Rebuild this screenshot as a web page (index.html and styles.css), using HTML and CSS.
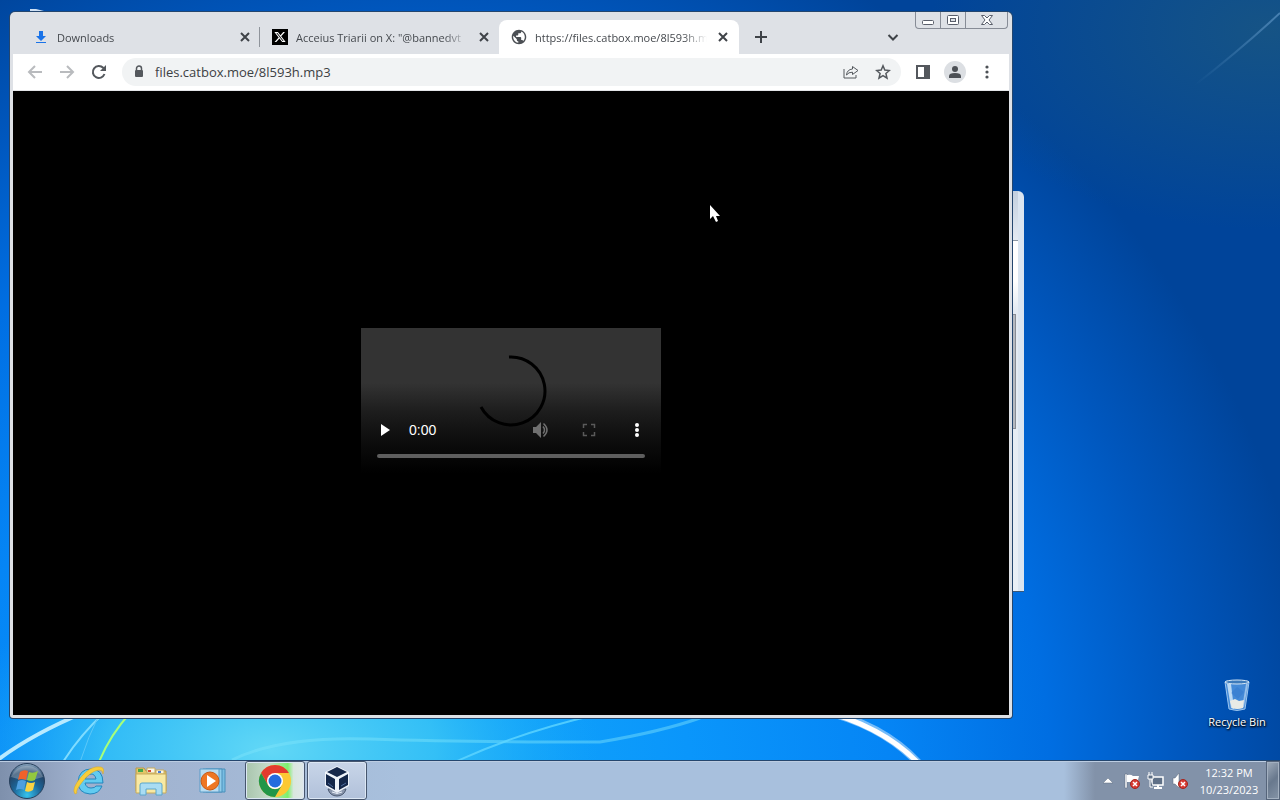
FILE: index.html
```
<!DOCTYPE html>
<html lang="en">
<head>
  <meta charset="UTF-8" />
  <meta name="viewport" content="width=device-width, initial-scale=1.0"/>
  <title>Desktop</title>
  <link rel="stylesheet" href="styles.css">
</head>
<body>

  <main class="desktop">
    <svg class="wallpaper" viewBox="0 0 1280 760" preserveAspectRatio="xMidYMax slice" aria-hidden="true">
      <defs>
        <radialGradient id="sky" gradientUnits="userSpaceOnUse" cx="420" cy="780" r="900">
          <stop offset="0" stop-color="#14a8fa"/>
          <stop offset=".3" stop-color="#0a96fb"/>
          <stop offset=".52" stop-color="#0585f5"/>
          <stop offset=".7" stop-color="#006ee2"/>
          <stop offset=".85" stop-color="#0057be"/>
          <stop offset="1" stop-color="#00449a"/>
        </radialGradient>
        <radialGradient id="glow">
          <stop offset="0" stop-color="#62d8f6"/>
          <stop offset=".5" stop-color="#3cc6f5" stop-opacity=".8"/>
          <stop offset="1" stop-color="#14a8fa" stop-opacity="0"/>
        </radialGradient>
        <radialGradient id="haze">
          <stop offset="0" stop-color="#1f5a7c" stop-opacity=".7"/>
          <stop offset="1" stop-color="#1f5a7c" stop-opacity="0"/>
        </radialGradient>
        <linearGradient id="ray" x1="0" y1="1" x2="1" y2="0">
          <stop offset="0" stop-color="#6aa0d0" stop-opacity="0"/>
          <stop offset="1" stop-color="#6aa0d0" stop-opacity=".6"/>
        </linearGradient>
      </defs>
      <rect width="1280" height="760" fill="url(#sky)"/>
      <ellipse cx="270" cy="750" rx="330" ry="180" fill="url(#glow)"/>
      <ellipse cx="1270" cy="30" rx="340" ry="200" fill="url(#haze)"/>
      <path d="M1195 85Q1240 50 1280 13" fill="none" stroke="url(#ray)" stroke-width="2"/>
      <g fill="none" stroke="#fff">
        <path d="M-5 762Q30 735 85 712" stroke="#b8eaff" stroke-width="4"/>
        <path d="M63 762Q80 735 105 712" stroke="#7fdcff" stroke-width="2"/>
        <path d="M80 762Q88 737 99 715" stroke="#5cc8f8"/>
        <path d="M99 762Q110 735 131 712" stroke="#a6ff7a" stroke-width="2"/>
        <path d="M232 760Q280 736 370 739T600 742Q660 732 700 718" stroke="#7fe4fb" stroke-width="3" opacity=".45"/>
        <path d="M455 762Q520 732 595 715" stroke="#5fd6ff" stroke-width="2" opacity=".8"/>
        <path d="M820 710Q885 725 921 766" stroke-width="8" opacity=".45"/>
        <path d="M820 710Q885 727 921 766" stroke-width="5"/>
      </g>
      <path d="M30 9h6l8 2v2H30z" fill="#cfe0f4"/>
    </svg>

    <a class="desktop-icon" href="#recycle-bin">
      <svg width="32" height="36" viewBox="0 0 32 36" aria-hidden="true">
        <path d="M4 4l4 27q8 3 16 0l4-27z" fill="#5b9ee4" fill-opacity=".75" stroke="#9cc6ef"/>
        <path d="M6 6l4 24 3 1-3-25z" fill="#d8ecfb" opacity=".8"/>
        <path d="M25 6l-4 24 2-1 4-23z" fill="#cbe2f8" opacity=".6"/>
        <path d="M9 23l5-2 4 2 5-1-1 8q-6 2-11 0z" fill="#e9ebe6"/>
        <path d="M10 15l6-6 7 5-6 7z" fill="#2b6fc8" opacity=".35"/>
        <ellipse cx="16" cy="4" rx="12" ry="2" fill="#3d7bbb" stroke="#d5e6f5"/>
      </svg>
      <span>Recycle Bin</span>
    </a>

    <div class="window-behind" aria-hidden="true">
      <div class="behind-caption"></div>
      <div class="behind-body"><div class="behind-thumb"></div></div>
    </div>

    <section class="browser" aria-label="Browser window">
      <div class="window-controls">
        <button class="win-min" aria-label="Minimize">
          <svg width="14" height="12" viewBox="0 0 14 12"><rect x="1.500" y="6.500" width="11" height="4" rx="1" fill="#fff" stroke="#5a5f6b"/></svg>
        </button>
        <button class="win-max" aria-label="Maximize">
          <svg width="14" height="12" viewBox="0 0 14 12"><rect x="1.500" y="1.500" width="11" height="9" rx="1" fill="#fff" stroke="#5a5f6b"/><rect x="4.500" y="4.500" width="5" height="3" fill="#dee1e6" stroke="#5a5f6b"/></svg>
        </button>
        <button class="win-close" aria-label="Close">
          <svg width="14" height="12" viewBox="0 0 14 12"><path d="M1.500 1.500h3L7 4l2.500-2.500h3L9 6l3.500 4.500h-3L7 8l-2.500 2.500h-3L5 6z" fill="#fff" stroke="#5a5f6b"/></svg>
        </button>
      </div>

      <div class="tab-strip" role="tablist">
        <div class="tab" role="tab">
          <svg width="16" height="16" viewBox="0 0 16 16"><path d="M6 2h4v5h3l-5 5-5-5h3zM3 13h10v1H3z" fill="#1a73e8"/></svg>
          <span class="tab-title">Downloads</span>
          <button class="tab-close" aria-label="Close tab"><svg width="10" height="10" viewBox="0 0 10 10"><path d="M1 1l8 8M9 1L1 9"/></svg></button>
        </div>
        <div class="tab" role="tab">
          <svg width="16" height="16" viewBox="-5 -5 34 34"><path d="M-5-5h34v34H-5z"/><path fill="#fff" d="M18.900 1.150h3.680l-8.040 9.190L24 22.850h-7.400l-5.800-7.590-6.640 7.590H.47l8.600-9.830L0 1.150h7.600l5.240 6.940zM17.600 20.640h2.040L6.490 3.240H4.300z"/></svg>
          <span class="tab-title">Acceius Triarii on X: "@bannedvt</span>
          <button class="tab-close" aria-label="Close tab"><svg width="10" height="10" viewBox="0 0 10 10"><path d="M1 1l8 8M9 1L1 9"/></svg></button>
        </div>
        <div class="tab active" role="tab" aria-selected="true">
          <svg width="16" height="16" viewBox="1 1 22 22"><path fill="#4b4f54" d="M12 2C6.480 2 2 6.480 2 12s4.480 10 10 10 10-4.480 10-10S17.520 2 12 2zm-1 17.930c-3.950-.49-7-3.850-7-7.930 0-.62.08-1.210.21-1.790L9 15v1c0 1.100.9 2 2 2v1.930zm6.900-2.540c-.26-.81-1-1.390-1.900-1.390h-1v-3c0-.55-.45-1-1-1H8v-2h2c.55 0 1-.45 1-1V7h2c1.100 0 2-.9 2-2v-.41c2.930 1.190 5 4.060 5 7.410 0 2.080-.8 3.970-2.100 5.390z"/></svg>
          <span class="tab-title">https://files.catbox.moe/8l593h.m</span>
          <button class="tab-close" aria-label="Close tab"><svg width="10" height="10" viewBox="0 0 10 10"><path d="M1 1l8 8M9 1L1 9"/></svg></button>
        </div>
        <button class="new-tab" aria-label="New tab"><svg width="14" height="14" viewBox="0 0 14 14"><path d="M7 1v12M1 7h12"/></svg></button>
        <button class="tab-search" aria-label="Search tabs"><svg width="12" height="12" viewBox="0 0 12 12"><path d="M1.500 4L6 8.500 10.500 4"/></svg></button>
      </div>

      <div class="toolbar">
        <button class="tool" aria-label="Back"><svg class="dim" width="16" height="16" viewBox="0 0 16 16"><path d="M15 8H2M8 2L2 8l6 6"/></svg></button>
        <button class="tool" aria-label="Forward"><svg class="dim" width="16" height="16" viewBox="0 0 16 16"><path d="M1 8h13M8 2l6 6-6 6"/></svg></button>
        <button class="tool" aria-label="Reload"><svg width="16" height="16" viewBox="0 0 16 16"><path d="M13.500 10A6 6 0 1 1 12.200 3.800L14 5.500" stroke-width="2"/><path d="M15 1v6H9z" fill="#54585d" stroke="none"/></svg></button>

        <div class="omnibox">
          <svg width="12" height="14" viewBox="0 0 12 14" aria-hidden="true"><rect x="2" y="5" width="8" height="7" rx="1" fill="#54585d"/><path d="M3.500 5V3.500a2.500 2.500 0 0 1 5 0V5" fill="none" stroke="#54585d" stroke-width="1.500"/></svg>
          <input class="address" type="text" aria-label="Address" value="files.catbox.moe/8l593h.mp3">
          <button class="tool" aria-label="Share"><svg width="16" height="16" viewBox="0 0 16 16"><path d="M1 5v9h12v-3" stroke-width="1"/><path d="M9.500 2.500l5.500 4-5.500 4V8.200Q5.500 8 3.500 11 4 5.500 9.500 5z" stroke-width="1"/></svg></button>
          <button class="tool" aria-label="Bookmark"><svg width="16" height="16" viewBox="0 0 16 16"><path d="M8 1.800l1.800 4.300 4.600.4-3.500 3 1.100 4.600L8 11.600l-4 2.500 1.100-4.600-3.500-3 4.600-.4z" stroke-width="1.500"/></svg></button>
        </div>

        <button class="tool" aria-label="Side panel"><svg width="14" height="14" viewBox="0 0 14 14"><path d="M1 1h12v12H1z" fill="#fff"/><path d="M9 1h4v12H9z" fill="#54585d"/></svg></button>
        <button class="tool" aria-label="Profile"><span class="avatar"><svg width="14" height="14" viewBox="0 0 14 14"><g fill="#4d5156" stroke="none"><circle cx="7" cy="4" r="3"/><path d="M1 13v-2q0-3 6-3t6 3v2z"/></g></svg></span></button>
        <button class="tool" aria-label="Menu"><svg width="4" height="14" viewBox="0 0 4 14"><g fill="#4d5156" stroke="none"><circle cx="2" cy="2" r="1.600"/><circle cx="2" cy="7" r="1.600"/><circle cx="2" cy="12" r="1.600"/></g></svg></button>
      </div>

      <div class="page">
        <div class="player">
          <svg class="spinner" width="74" height="74" viewBox="0 0 74 74" aria-hidden="true"><path d="M35 3A34 34 0 1 1 7 53" fill="none" stroke="#000" stroke-width="3"/></svg>
          <div class="controls">
            <button aria-label="Play"><svg width="10" height="12" viewBox="0 0 10 12"><path d="M1 0l9 6-9 6z" fill="#fff"/></svg></button>
            <span class="time">0:00</span>
            <button aria-label="Mute"><svg width="18" height="16" viewBox="0 0 18 16"><path d="M1 5h3l5-5v16l-5-5H1z" fill="#707070"/><path d="M11 4.500q3 3.500 0 7M11.500 1.500q7 6.500 0 13" fill="none" stroke="#707070" stroke-width="1.500"/></svg></button>
            <button aria-label="Full screen"><svg width="14" height="14" viewBox="0 0 14 14"><path d="M1.500 5V1.500H5M9 1.500h3.500V5M12.500 9v3.500H9M5 12.500H1.500V9" fill="none" stroke="#5a5a5a" stroke-width="1.500"/></svg></button>
            <button aria-label="More options"><svg width="4" height="14" viewBox="0 0 4 14"><g fill="#fff"><circle cx="2" cy="2" r="2"/><circle cx="2" cy="7" r="2"/><circle cx="2" cy="12" r="2"/></g></svg></button>
          </div>
          <input class="timeline" type="range" min="0" max="100" value="0" aria-label="Seek">
        </div>
      </div>
    </section>

    <svg class="pointer" width="12" height="18" viewBox="0 0 12 18" aria-hidden="true"><path d="M1 0v14l3-3 3 6 2-1-2-5h4z" fill="#fff"/></svg>
  </main>

  <footer class="taskbar">
    <button class="start" aria-label="Start">
      <svg width="38" height="38" viewBox="0 0 38 38">
        <defs>
          <radialGradient id="orb" cx=".5" cy=".9" r=".9">
            <stop offset="0" stop-color="#35c3ee"/>
            <stop offset=".45" stop-color="#1c6497"/>
            <stop offset=".75" stop-color="#234568"/>
            <stop offset="1" stop-color="#8fabc4"/>
          </radialGradient>
        </defs>
        <circle cx="19" cy="19" r="17.500" fill="url(#orb)" stroke="#27405c"/>
        <path d="M3 15A17 17 0 0 1 35 15Q19 21 3 15z" fill="#fff" opacity=".25"/>
        <path d="M12 10q4-3 8-1l-2 9q-4-2-8 0z" fill="#f0622a"/>
        <path d="M21 10q4 2 9-1l-3 9q-4 2-8 0z" fill="#93c83e"/>
        <path d="M10 19q4-2 8 0l-2 9q-4-2-8 0z" fill="#4f9fe0"/>
        <path d="M19 20q4 2 8 0l-2 8q-4 3-8 1z" fill="#fbd243"/>
      </svg>
    </button>
    <nav class="apps">
      <button class="app" aria-label="Internet Explorer">
        <svg width="34" height="34" viewBox="0 0 34 34">
          <path d="M31 19H13q1 5 6 5 4 0 5-2h6q-3 8-12 8Q6 29 6 18 7 5 19 5q12 0 12 14zm-18-4h11q-1-5-5-5t-6 5z" fill="#62cbf0" stroke="#2386bd"/>
          <path d="M3 30Q-1 25 9 13T29 3q4 1 2 7 0-4-4-4-8 1-16 11T5 29z" fill="#f7cd3b" stroke="#d9a521" stroke-width=".5"/>
        </svg>
      </button>
      <button class="app" aria-label="Windows Explorer">
        <svg width="34" height="32" viewBox="0 0 34 32">
          <path d="M2 3h8l2 3h20v20H2z" fill="#e4c768" stroke="#b9994a"/>
          <path d="M4 4h5v3H4z" fill="#45a849"/>
          <path d="M13 3h8v5h-8zM22 5h8v4h-8z" fill="#fbf7e8" stroke="#c7ab5c"/>
          <path d="M14 5h3v2h-3z" fill="#d94a2e"/><path d="M24 6h3v2h-3z" fill="#4b7dd1"/>
          <path d="M2 9h30v19H2z" fill="#f8e9a3" stroke="#c7ab5c"/>
          <path d="M6 30V20q0-2 2-2h18q2 0 2 2v10h-6v-6H12v6z" fill="#a9dcf3" stroke="#5aa6cc"/>
        </svg>
      </button>
      <button class="app" aria-label="Windows Media Player">
        <svg width="30" height="28" viewBox="0 0 30 28">
          <path d="M8 2h19v23H8z" fill="#79bde2" stroke="#4a90bb"/>
          <path d="M5 2h19v23H5z" fill="#91cdeb" stroke="#4a90bb"/>
          <path d="M2 2h19v23H2z" fill="#b8dcf1" stroke="#5a9dc8"/>
          <circle cx="12" cy="14" r="9" fill="#ee7623" stroke="#c85a15"/>
          <path d="M9 8l9 6-9 6z" fill="#fff"/>
        </svg>
      </button>
      <button class="app running chrome" aria-label="Google Chrome">
        <svg width="34" height="34" viewBox="0 0 34 34">
          <circle cx="17" cy="17" r="16" fill="#fcc934"/>
          <path d="M3.100 9A16 16 0 0 1 30.900 9H17z" fill="#e33b2e"/>
          <path d="M3.100 9L10 21 17 9z" fill="#e33b2e"/>
          <path d="M3.100 9L10 21a8 8 0 0 0 14 0l-7 12A16 16 0 0 1 3.100 9z" fill="#229648"/>
          <circle cx="17" cy="17" r="8" fill="#fff"/>
          <circle cx="17" cy="17" r="6.500" fill="#256bdd"/>
        </svg>
      </button>
      <button class="app running" aria-label="VirtualBox">
        <svg width="28" height="32" viewBox="0 0 28 32">
          <path d="M5 24q2 7 9 7t9-7z" fill="#8a97ad" stroke="#4a5870"/>
          <path d="M9 27q5 3 10 0" fill="none" stroke="#e8eef8"/>
          <path d="M14 1l12 6v14l-12 7-12-7V7z" fill="#eef3fa"/>
          <path d="M14 2l10 5-10 5L4 7z" fill="#14274a"/>
          <path d="M3 9l9 5v11l-9-5zM25 9l-9 5v11l9-5z" fill="#14274a"/>
          <path d="M5 18l5 4M18 21l5-3" stroke="#4c6b9c"/>
        </svg>
      </button>
    </nav>
    <div class="tray">
      <button aria-label="Show hidden icons"><svg width="10" height="6" viewBox="0 0 10 6"><path d="M5 0l5 5H0z" fill="#fff" stroke="#5c6c82" stroke-width=".5"/></svg></button>
      <button aria-label="Action Center"><svg width="18" height="18" viewBox="0 0 18 18"><path d="M2 2h2v14H2z" fill="#fff" stroke="#59677a" stroke-width=".5"/><path d="M4 3q4-1 6 1h6l-1 4 1 3q-4 1-6-1H4z" fill="#fff"/><circle cx="12" cy="12" r="4.500" fill="#d83b32" stroke="#a32620"/><path d="M10 10l4 4M14 10l-4 4" stroke="#fff" stroke-width="1.500"/></svg></button>
      <button aria-label="Network"><svg width="18" height="18" viewBox="0 0 18 18"><path d="M5 5h11v8H5z" fill="#5f7087" stroke="#fff" stroke-width="1.500"/><path d="M7 16h8M11 13v3" stroke="#fff" stroke-width="2"/><path d="M1 3h5v4H1zM2 0v3M5 0v3M3 7v8h3" fill="#5f7087" stroke="#fff"/></svg></button>
      <button aria-label="Volume"><svg width="18" height="18" viewBox="0 0 18 18"><path d="M2 6h2l4-5v15l-4-4H2z" fill="#fff" stroke="#59677a" stroke-width=".5"/><circle cx="12" cy="12" r="4.500" fill="#d83b32" stroke="#a32620"/><path d="M10 10l4 4M14 10l-4 4" stroke="#fff" stroke-width="1.500"/></svg></button>
    </div>
    <div class="clock"><span>12:32 PM</span><span>10/23/2023</span></div>
    <button class="show-desktop" aria-label="Show desktop"></button>
  </footer>

</body>
</html>
```
FILE: styles.css
```
:root {
  --frame: #dee1e6;
  --icon: #54585d;
  --field: #f1f3f4;
}

* {
  box-sizing: border-box;
}

body {
  margin: 0;
  height: 100vh;
  display: flex;
  flex-direction: column;
  overflow: hidden;
  font-family: "Open Sans", "Noto Sans", sans-serif;
  font-size: 11px;
}

button {
  display: flex;
  align-items: center;
  justify-content: center;
  padding: 0;
  border: 0;
  background: none;
  font: inherit;
}

button svg,
.tab > svg {
  flex: none;
}

/* desktop */
.desktop {
  position: relative;
  flex: 1;
  min-height: 0;
  background: #0059c2;
}

.wallpaper {
  position: absolute;
  width: 100%;
  height: 100%;
}

.desktop-icon {
  position: absolute;
  right: 6px;
  bottom: 30px;
  width: 74px;
  display: flex;
  flex-direction: column;
  align-items: center;
  color: #fff;
  line-height: 16px;
  text-decoration: none;
  text-shadow: 1px 1px 2px #000, 0 1px 2px #000;
}

.window-behind {
  position: absolute;
  top: 191px;
  right: 256px;
  bottom: 168px;
  width: 50%;
  padding-right: 6px;
  display: flex;
  flex-direction: column;
  border: 1px solid #3a5878;
  border-width: 0 0 1px;
  border-radius: 0 6px 0 0;
  background: #dbe5f0;
}

.behind-caption {
  height: 50px;
  border-bottom: 1px solid #8c97a3;
  background: linear-gradient(#c3cfde, #e4eaf2);
}

.behind-body {
  flex: 1;
  padding-top: 73px;
  background: linear-gradient(#fff 40px, #e3eaf2 70px, #e9eff6);
}

.behind-thumb {
  height: 115px;
  margin-right: 2px;
  border: 1px solid #888c94;
  background: #b5b9c0;
}

.pointer {
  position: absolute;
  top: 205px;
  left: 709px;
}

/* browser window */
.browser {
  position: absolute;
  top: 12px;
  right: 268px;
  bottom: 42px;
  left: 10px;
  display: flex;
  flex-direction: column;
  padding: 0 3px 3px;
  border-radius: 5px 5px 3px 3px;
  background: var(--frame);
  box-shadow: 0 0 0 1px #24466e;
}

.window-controls {
  position: absolute;
  top: 0;
  right: 4px;
  display: flex;
  border: 1px solid #878c96;
  border-top: 0;
  border-radius: 0 0 4px 4px;
}

.window-controls button {
  width: 24px;
  height: 16px;
}

.window-controls .win-max {
  width: 26px;
  border: 1px solid #878c96;
  border-width: 0 1px;
}

.window-controls .win-close {
  width: 41px;
}

.tab-strip {
  display: flex;
  align-items: center;
  height: 42px;
  padding: 8px 0 0 8px;
  color: #45494e;
}

.tab {
  flex: 0 1 239px;
  min-width: 0;
  height: 34px;
  display: flex;
  align-items: center;
  gap: 8px;
  padding: 0 7px 0 12px;
}

.tab:first-child {
  background: linear-gradient(#8f949b, #8f949b) right / 1px 20px no-repeat;
}

.tab.active {
  flex-basis: 240px;
  padding-right: 8px;
  border-radius: 8px 8px 0 0;
  background: #fff;
}

.tab-title {
  flex: 1;
  overflow: hidden;
  white-space: nowrap;
  -webkit-mask-image: linear-gradient(to left, transparent, #000 24px);
  mask-image: linear-gradient(to left, transparent, #000 24px);
}

.tab-close {
  width: 16px;
  height: 16px;
}

.tab-strip button path {
  fill: none;
  stroke: #3f4348;
  stroke-width: 2;
}

.new-tab {
  width: 28px;
  height: 28px;
  margin-left: 8px;
}

.tab-search {
  width: 28px;
  height: 28px;
  margin-left: auto;
  margin-right: 102px;
}

.toolbar {
  display: flex;
  align-items: center;
  height: 37px;
  padding: 0 6px;
  border-bottom: 1px solid #e3e5e8;
  background: #fff;
}

.tool {
  flex: none;
  width: 32px;
  height: 28px;
}

.tool svg {
  fill: none;
  stroke: var(--icon);
  stroke-width: 2;
}

.tool .dim {
  stroke: #b9bbbe;
}

.omnibox {
  flex: 1;
  min-width: 0;
  height: 28px;
  margin: 0 6px 0 7px;
  padding: 0 2px 0 11px;
  display: flex;
  align-items: center;
  border-radius: 14px;
  background: var(--field);
}

.address {
  flex: 1;
  min-width: 0;
  margin-left: 10px;
  padding: 0;
  border: 0;
  outline: 0;
  color: #3c4043;
  background: none;
  font: inherit;
  font-size: 13px;
}

.avatar {
  display: flex;
  align-items: center;
  justify-content: center;
  width: 22px;
  height: 22px;
  border-radius: 50%;
  background: #dcdfe3;
}

.page {
  flex: 1;
  min-height: 0;
  display: flex;
  align-items: center;
  justify-content: center;
  background: #000;
}

/* media player */
.player {
  position: relative;
  width: 300px;
  height: 150px;
  display: flex;
  flex-direction: column;
  justify-content: flex-end;
  padding-bottom: 20px;
  background: linear-gradient(#333 55px, #1c1c1c 85px, #0c0c0c 115px, #000 145px);
}

.spinner {
  position: absolute;
  top: 26px;
  left: 113px;
}

.controls {
  position: relative;
  display: flex;
  gap: 16px;
  padding: 0 8px;
}

.controls button {
  width: 32px;
  height: 32px;
}

.time {
  flex: 1;
  margin-left: -8px;
  color: #fff;
  font: 14px/32px "Liberation Sans", Arial, sans-serif;
}

.timeline {
  appearance: none;
  height: 4px;
  margin: 8px 16px 0;
  border-radius: 2px;
  background: #5e5e5e;
}

.timeline::-webkit-slider-thumb {
  appearance: none;
  width: 1px;
  height: 4px;
}

/* taskbar */
.taskbar {
  display: flex;
  height: 40px;
  border-top: 1px solid #24466e;
  background: linear-gradient(to right, #7e90ac, #9fb0cd 80px, #a8c0dd 400px, #a8c0dd calc(100% - 216px), #8292a9 calc(100% - 185px), #8292a9);
  box-shadow: inset 0 1px 0 #bccde2;
}

.start {
  width: 54px;
}

.apps {
  display: flex;
  gap: 2px;
  margin-left: 5px;
}

.app {
  width: 60px;
}

.app.running {
  border: 1px solid #46566e;
  border-radius: 3px;
  background: linear-gradient(#c8d5e8, #b1c1da);
  box-shadow: inset 0 0 0 1px #dce7f4;
}

.app.chrome {
  background: linear-gradient(to right, #a9c5ad, #c5dccb 40%, #7df06c 72%, #d9e6df 82%, #dfe8ea);
}

.tray {
  display: flex;
  align-items: center;
  margin-left: auto;
}

.tray button {
  width: 24px;
  height: 24px;
}

.clock {
  width: 74px;
  display: flex;
  flex-direction: column;
  justify-content: center;
  align-items: center;
  color: #fff;
  line-height: 17px;
}

.show-desktop {
  width: 14px;
  border: 1px solid #55647a;
  background: linear-gradient(135deg, #a0acbb, #68788d 50%, #8594a7);
  box-shadow: inset 0 0 0 1px #a3b0c0;
}
```
